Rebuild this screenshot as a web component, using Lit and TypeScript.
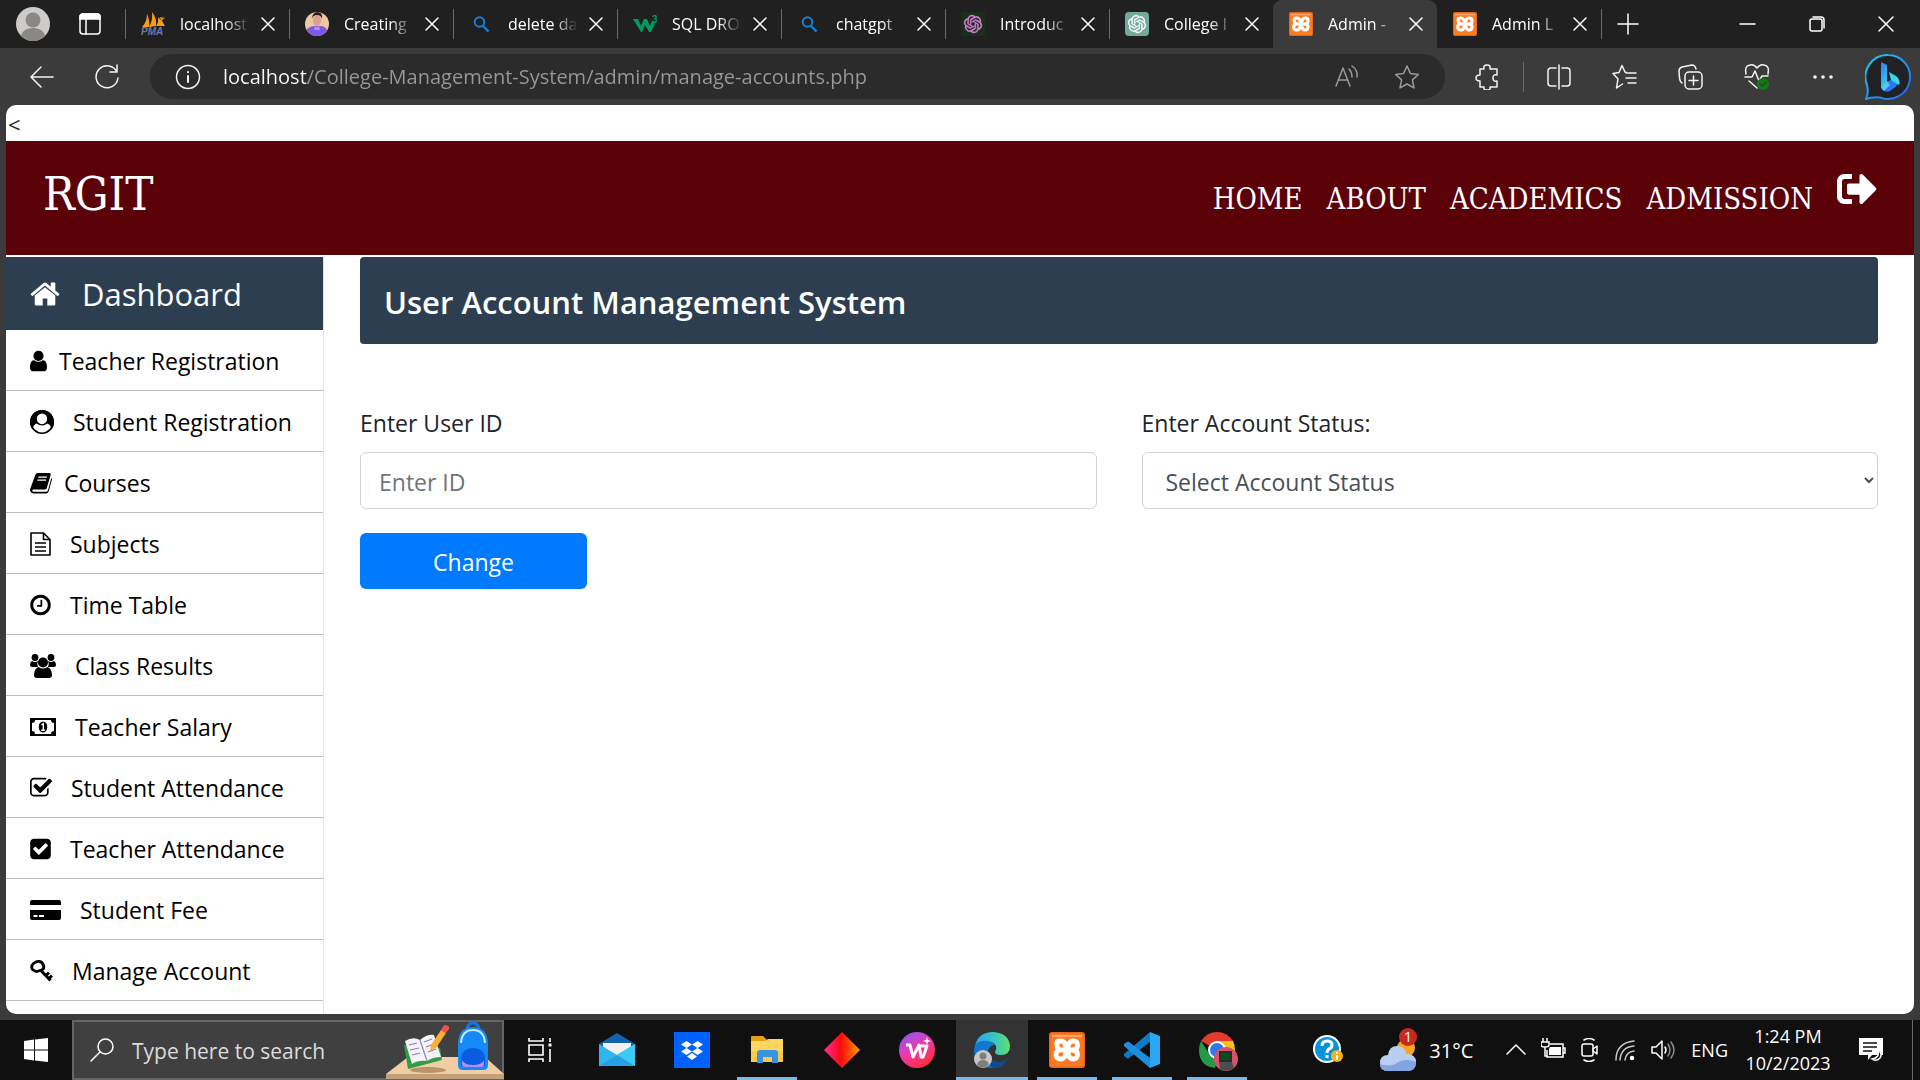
import { LitElement, html, css, TemplateResult } from "lit";
import { customElement } from "lit/decorators.js";
import { classMap } from "lit/directives/class-map.js";

const openAiMark =
  "M22.2819 9.8211a5.9847 5.9847 0 0 0-.5157-4.9108 6.0462 6.0462 0 0 0-6.5098-2.9A6.0651 6.0651 0 0 0 4.9807 4.1818a5.9847 5.9847 0 0 0-3.9977 2.9 6.0462 6.0462 0 0 0 .7427 7.0966 5.98 5.98 0 0 0 .511 4.9107 6.051 6.051 0 0 0 6.5146 2.9001A5.9847 5.9847 0 0 0 13.2599 24a6.0557 6.0557 0 0 0 5.7718-4.2058 5.9894 5.9894 0 0 0 3.9977-2.9001 6.0557 6.0557 0 0 0-.7475-7.0729zm-9.022 12.6081a4.4755 4.4755 0 0 1-2.8764-1.0408l.1419-.0804 4.7783-2.7582a.7948.7948 0 0 0 .3927-.6813v-6.7369l2.02 1.1686a.071.071 0 0 1 .038.052v5.5826a4.504 4.504 0 0 1-4.4945 4.4944zm-9.6607-4.1254a4.4708 4.4708 0 0 1-.5346-3.0137l.142.0852 4.783 2.7582a.7712.7712 0 0 0 .7806 0l5.8428-3.3685v2.3324a.0804.0804 0 0 1-.0332.0615L9.74 19.9502a4.4992 4.4992 0 0 1-6.1408-1.6464zM2.3408 7.8956a4.485 4.485 0 0 1 2.3655-1.9728V11.6a.7664.7664 0 0 0 .3879.6765l5.8144 3.3543-2.0201 1.1685a.0757.0757 0 0 1-.071 0l-4.8303-2.7865A4.504 4.504 0 0 1 2.3408 7.872zm16.5963 3.8558L13.1038 8.364 15.1192 7.2a.0757.0757 0 0 1 .071 0l4.8303 2.7913a4.4944 4.4944 0 0 1-.6765 8.1042v-5.6772a.79.79 0 0 0-.407-.667zm2.0107-3.0231l-.142-.0852-4.7735-2.7818a.7759.7759 0 0 0-.7854 0L9.409 9.2297V6.8974a.0662.0662 0 0 1 .0284-.0615l4.8303-2.7866a4.4992 4.4992 0 0 1 6.6802 4.66zM8.3065 12.863l-2.02-1.1638a.0804.0804 0 0 1-.038-.0567V6.0742a4.4992 4.4992 0 0 1 7.3757-3.4537l-.142.0805L8.704 5.459a.7948.7948 0 0 0-.3927.6813zm1.0976-2.3654l2.602-1.4998 2.6069 1.4998v2.9994l-2.5974 1.4997-2.6067-1.4997Z";

const searchFavicon = html`<svg class="fav" viewBox="0 0 24 24" fill="none" stroke="#1a7fd6" stroke-width="2">
  <circle cx="10.500" cy="10" r="4.800" /><path d="M14 14l5.500 5.500" stroke-width="2.400" />
</svg>`;

const xampp = (cls: string) => html`<svg class=${cls} viewBox="0 0 36 36">
  <rect width="36" height="36" rx="3" fill="#e8661c" />
  <rect x="1.500" y="1.500" width="33" height="33" rx="2" fill="#fb7a24" />
  <path d="M3 4h30" stroke="#fdb98a" stroke-width="2" opacity=".7" />
  <g fill="none" stroke="#fff" stroke-width="4.800" stroke-linejoin="round" stroke-linecap="round">
    <path d="M8 10v3q0 5 5 5h11" />
    <path d="M8 12q0-3 3.500-3t4.500 3l2 6 2 6q1 3 4.500 3t4-4q0-5-4.500-5 4.500 0 4.500-5 0-4-4-4t-5 4l-3 10q-1 4-5 4t-4.500-4q0-4 3.500-5" />
  </g>
</svg>`;

interface Tab { title: string; icon: TemplateResult; active?: boolean; line?: boolean; }

const tabs: Tab[] = [
  {
    title: "localhost", line: true,
    icon: html`<svg class="fav" viewBox="0 0 24 24"><path d="M1 15Q6 10 6 2q3 6 2 13zM8 15Q12 9 11 0q5 6 4 14zM15 14q3-4 2-9 5 4 7 9z" fill="#f89c1c" /><path d="M13 5l4 10M19 5l5 1-4 3z" fill="#e8871a" /><text x="0" y="23" font-size="10" font-weight="700" font-style="italic" font-family="Liberation Sans, sans-serif" fill="#6c78af">PMA</text></svg>`,
  },
  {
    title: "Creating", line: true,
    icon: html`<svg class="fav" viewBox="0 0 24 24"><defs><clipPath id="avatar"><circle cx="12" cy="12" r="12" /></clipPath></defs><g clip-path="url(#avatar)"><rect width="24" height="24" fill="#edc8a1" /><path d="M2 24V17q3-3 7-3h6q5 0 7 4v6z" fill="#7d59e6" /><ellipse cx="12" cy="8.500" rx="4" ry="5.500" fill="#dba18c" /><path d="M7 7Q7 1 12 0q6 0 5 7-1-4-5-4T7 7z" fill="#2b1a1c" /><path d="M10 14q2 2 4 0l1 4h-6z" fill="#b98cf0" /></g></svg>`,
  },
  { title: "delete da", line: true, icon: searchFavicon },
  {
    title: "SQL DRO", line: true,
    icon: html`<svg class="fav" viewBox="0 0 24 24" fill="#059862"><path d="M0 7h5l3 7 3-7h3l3 7 2-5 3 3-4 8h-2l-4-7-3 7H8z" /><text x="19" y="11" font-size="10" font-weight="700" font-family="Liberation Sans, sans-serif">3</text></svg>`,
  },
  { title: "chatgpt", line: true, icon: searchFavicon },
  {
    title: "Introduc", line: true,
    icon: html`<svg class="fav" viewBox="0 0 24 24"><rect width="24" height="24" fill="#18301a" /><path transform="translate(3 3) scale(.75)" d=${openAiMark} fill="#df7fdc" stroke="#df7fdc" stroke-width=".5" /></svg>`,
  },
  {
    title: "College I", line: true,
    icon: html`<svg class="fav" viewBox="0 0 24 24"><rect width="24" height="24" rx="4" fill="#74aa9c" /><path transform="translate(3 3) scale(.75)" d=${openAiMark} fill="#fff" stroke="#fff" stroke-width=".3" /></svg>`,
  },
  { title: "Admin -", active: true, icon: xampp("fav") },
  { title: "Admin L", icon: xampp("fav") },
];

interface MenuItem { label: string; icon: TemplateResult; near?: boolean; }

const menu: MenuItem[] = [
  {
    label: "Teacher Registration", near: true,
    icon: html`<svg width="17" height="24" viewBox="256 0 1280 1792"><path d="M1536 1399q0 109-62.5 187t-150.5 78h-854q-88 0-150.5-78t-62.5-187q0-85 8.500-160.500t31.500-152 58.500-131 94-89 134.500-34.500q131 128 313 128t313-128q76 0 134.500 34.500t94 89 58.500 131 31.500 152 8.500 160.500zm-256-887q0 159-112.500 271.500t-271.500 112.500-271.500-112.500-112.500-271.500 112.500-271.500 271.500-112.500 271.500 112.500 112.500 271.500z" /></svg>`,
  },
  {
    label: "Student Registration",
    icon: html`<svg width="24" height="24" viewBox="0 0 24 24"><circle cx="12" cy="12" r="11.200" fill="none" stroke="#000" stroke-width="1.600" /><path fill-rule="evenodd" d="M12 0a12 12 0 0 1 9.500 19.300C21 16 19.500 14 17.200 13.400 15.700 14.700 14 15.400 12 15.400s-3.700-.7-5.200-2C4.500 14 3 16 2.500 19.300A12 12 0 0 1 12 0zm0 3.400a5.200 5.400 0 1 0 0 10.800 5.200 5.400 0 1 0 0-10.800z" /></svg>`,
  },
  {
    label: "Courses", near: true,
    icon: html`<svg width="22" height="24" viewBox="0 0 22 24"><path fill-rule="evenodd" d="M8 2h11.500q1.600.3 1.100 2l-3.800 13q-.5 1.500-2 1.500H3.500q-1.300 0-1.300 1t1.300 1.200h13q1 0 1.400-1.100L21.300 7q1 .6.600 1.800l-3.200 11.500Q18 22.500 16 22.500H3.500Q0 22 0 18.500L5.300 4Q6 2 8 2zM8.500 5.500l-.4 1.200h8.600l.4-1.200zM7.700 8.500l-.4 1.200h8.600l.4-1.200z" /></svg>`,
  },
  {
    label: "Subjects",
    icon: html`<svg width="21" height="24" viewBox="0 0 21 24" fill="none" stroke="#000" stroke-width="1.600"><path d="M1 1h12.500L20 7.500V23H1zM13.500 1v6.500H20M5 11h11M5 15h11M5 19h11" stroke-linejoin="round" /></svg>`,
  },
  {
    label: "Time Table",
    icon: html`<svg width="21" height="24" viewBox="128 0 1536 1792"><path d="M1024 544v448q0 14-9 23t-23 9h-320q-14 0-23-9t-9-23v-64q0-14 9-23t23-9h224v-352q0-14 9-23t23-9h64q14 0 23 9t9 23zm416 352q0-148-73-273t-198-198-273-73-273 73-198 198-73 273 73 273 198 198 273 73 273-73 198-198 73-273zm224 0q0 209-103 385.500t-279.500 279.500-385.500 103-385.500-103-279.500-279.500-103-385.500 103-385.500 279.500-279.500 385.500-103 385.500 103 279.500 279.500 103 385.500z" /></svg>`,
  },
  {
    label: "Class Results",
    icon: html`<svg width="26" height="24" viewBox="0 0 26 24"><circle cx="5" cy="3.500" r="3.400" /><circle cx="21" cy="3.500" r="3.400" /><circle cx="13" cy="8.500" r="5" /><path d="M2 7q3 2 6 0-1.500 3 0 6H2q-2 0-2-2 0-3 2-4zM24 7q-3 2-6 0 1.500 3 0 6h6q2 0 2-2 0-3-2-4zM8.500 13q4.500 3 9 0 4 1 4.500 8 0 3-3 3H7q-3 0-3-3 .5-7 4.500-8z" /></svg>`,
  },
  {
    label: "Teacher Salary",
    icon: html`<svg width="26" height="24" viewBox="0 0 26 24"><path fill-rule="evenodd" d="M0 3h26v18H0zM5 5Q5 8 2 8v8q3 0 3 3h16q0-3 3-3V8q-3 0-3-3z" /><ellipse cx="13" cy="12" rx="4.300" ry="5.500" /><path d="M11.500 10l1.800-1.400V15M11.300 15.200h3.600" stroke="#fff" stroke-width="1.400" fill="none" /></svg>`,
  },
  {
    label: "Student Attendance",
    icon: html`<svg width="22" height="24" viewBox="64 0 1664 1792"><path d="M1472 930v318q0 119-84.500 203.500t-203.500 84.500h-832q-119 0-203.500-84.500t-84.500-203.500v-832q0-119 84.500-203.500t203.500-84.500h832q63 0 117 25 15 7 18 23 3 17-9 29l-49 49q-10 10-23 10-3 0-9-2-23-6-45-6h-832q-66 0-113 47t-47 113v832q0 66 47 113t113 47h832q66 0 113-47t47-113v-254q0-13 9-22l64-64q10-10 23-10 6 0 12 3 20 8 20 29zm231-489l-814 814q-24 24-57 24t-57-24l-430-430q-24-24-24-57t24-57l110-110q24-24 57-24t57 24l263 263 647-647q24-24 57-24t57 24l110 110q24 24 24 57t-24 57z" /></svg>`,
  },
  {
    label: "Teacher Attendance",
    icon: html`<svg width="21" height="24" viewBox="128 0 1536 1792"><path d="M813 1299l614-614q19-19 19-45t-19-45l-102-102q-19-19-45-19t-45 19l-467 467-211-211q-19-19-45-19t-45 19l-102 102q-19 19-19 45t19 45l358 358q19 19 45 19t45-19zm851-883v960q0 119-84.500 203.500t-203.500 84.500h-960q-119 0-203.500-84.500t-84.500-203.500v-960q0-119 84.500-203.500t203.500-84.500h960q119 0 203.500 84.500t84.500 203.500z" /></svg>`,
  },
  {
    label: "Student Fee",
    icon: html`<svg width="31" height="24" viewBox="0 0 31 24"><path fill-rule="evenodd" d="M2 2h27q2 0 2 2v3H0V4q0-2 2-2zM0 12h31v8q0 2-2 2H2q-2 0-2-2zM3.500 17v2h4v-2zM9 17v2h5v-2z" /></svg>`,
  },
  {
    label: "Manage Account",
    icon: html`<svg width="23" height="24" viewBox="0 0 23 24" fill="none" stroke="#000"><path d="M2.500 10.500Q.5 7 3.500 4.500t6-2 4 4-2 4.500-4.500 1.500-4.500-2z" stroke-width="2.800" /><path d="M10.500 11l10 10.500M16 16.500l3-3M19 19.500l3-3" stroke-width="3" /></svg>`,
  },
];

interface TaskApp { name: string; icon: TemplateResult; open?: boolean; active?: boolean; }

const taskApps: TaskApp[] = [
  {
    name: "Mail",
    icon: html`<svg viewBox="0 0 36 36"><path d="M0 12L18 1l18 11v22H0z" fill="#1463ad" /><path d="M4 11h28v14H4z" fill="#f1f1f3" /><path d="M0 12l18 11L36 12v22H0z" fill="#32b5ee" /><path d="M36 12L0 34h34q2 0 2-2z" fill="#3ccbf4" /><path d="M0 34l18-11 18 11z" fill="#1a90da" opacity=".7" /></svg>`,
  },
  {
    name: "Dropbox",
    icon: html`<svg viewBox="0 0 36 36"><rect width="36" height="36" fill="#0061fe" /><path d="M12.500 9l5.500 3.500-5.500 3.500L7 12.500zM23.500 9l5.500 3.500-5.500 3.500-5.500-3.500zM12.500 16l5.500 3.500-5.500 3.500L7 19.500zM23.500 16l5.500 3.500-5.500 3.500-5.500-3.500zM18 21l5 3.500-5 3.500-5-3.500z" fill="#fff" /></svg>`,
  },
  {
    name: "File Explorer", open: true,
    icon: html`<svg viewBox="0 0 36 36"><path d="M2 5q0-1 1-1h11l4 4h15q1 0 1 1v5H2z" fill="#e0a011" /><path d="M2 9h14l3-2h15v22q0 1-1 1H2z" fill="#ffd560" /><path d="M2 19h32v10q0 1-1 1H3q-1 0-1-1z" fill="#fac94c" /><path d="M8 31V21q0-3 3-3h15q3 0 3 3v10h-6v-6h-9v6z" fill="#3a93dd" /></svg>`,
  },
  {
    name: "Diamond",
    icon: html`<svg viewBox="0 0 36 36"><defs><linearGradient id="diamond"><stop offset="0" stop-color="#ff2d9c" /><stop offset=".45" stop-color="#fb0a10" /><stop offset=".6" stop-color="#ff2a00" /><stop offset="1" stop-color="#ffa000" /></linearGradient></defs><path d="M18 0l18 18-18 18L0 18z" fill="url(#diamond)" /></svg>`,
  },
  {
    name: "WPS Office",
    icon: html`<svg viewBox="0 0 36 36"><defs><linearGradient id="wps" x1="0" y1="0" x2=".6" y2="1"><stop offset="0" stop-color="#7a5cff" /><stop offset=".5" stop-color="#e63bb4" /><stop offset="1" stop-color="#ff2d3f" /></linearGradient></defs><circle cx="18" cy="18" r="18" fill="url(#wps)" /><path d="M7 13h4l3 12 6-12 2 12h2l4-11h-9" fill="none" stroke="#fff" stroke-width="3" stroke-linejoin="round" /><path d="M28 5l1 3 3 1-3 1-1 3-1-3-3-1 3-1z" fill="#fff" /></svg>`,
  },
  {
    name: "Microsoft Edge", active: true,
    icon: html`<svg viewBox="0 0 36 36"><defs><linearGradient id="edgeTop"><stop offset="0" stop-color="#2aa5e6" /><stop offset=".5" stop-color="#35c1c9" /><stop offset="1" stop-color="#62e06c" /></linearGradient></defs><path d="M1 14Q4 0 19 0q16 1 17 14 0 9-9 9-6 0-6-3 2-3 1-6-3-5-10-4-7 0-11 4z" fill="url(#edgeTop)" /><path d="M0 18q0-8 8-9 9-1 13 4-6 0-7 7 0 8 9 11 4 1 9-2-5 7-14 7Q1 35 0 18z" fill="#1277cf" /><path d="M14 19q0 9 9 11 5 1 11-4-5 11-15 10-9-5-5-17z" fill="#0d4a94" /><circle cx="9" cy="27" r="9" fill="#c8c8c6" /><circle cx="9" cy="24" r="3.500" fill="#807d7a" /><path d="M3 33q1-5 6-5t6 5q-6 5-12 0z" fill="#807d7a" /></svg>`,
  },
  { name: "XAMPP", open: true, icon: xampp("") },
  {
    name: "Visual Studio Code", open: true,
    icon: html`<svg viewBox="0 0 36 36"><path d="M26 0l10 4v28l-10 4z" fill="#2aa6f2" /><path d="M26 0v10L5 26q-1 1-2 0l-3-2q-1-1 0-2z" fill="#0f79c4" /><path d="M26 36V26L5 10q-1-1-2 0l-3 2q-1 1 0 2z" fill="#1f8fdc" /></svg>`,
  },
  {
    name: "Google Chrome", open: true,
    icon: html`<svg viewBox="0 0 36 36" overflow="visible"><path d="M18 18L2 9Q8 0 18 0t16 9z" fill="#e33b2e" /><path d="M18 9h16q2 4 2 9 0 12-10 16z" fill="#fbc116" /><path d="M2 9l9 14 8 3-3 10Q0 34 0 18q0-5 2-9z" fill="#249a48" /><circle cx="18" cy="18" r="9" fill="#fff" /><circle cx="18" cy="18" r="7" fill="#2f78e8" /><circle cx="27" cy="27" r="12" fill="#d5536b" /><path d="M20 30h13l2 6q-7 5-14 1z" fill="#4a4f4c" /><path d="M20 19h13v11H20z" fill="#23302a" /><path d="M22 21h9v7h-9z" fill="#0b4d1c" /></svg>`,
  },
];

@customElement("app-root")
export class AppRoot extends LitElement {
  static styles = css`
    :host {
      display: flex;
      flex-direction: column;
      height: 100vh;
      overflow: hidden;
      background: #3b3b3b;
      color: #212529;
      font-family: "Open Sans", "Noto Sans", sans-serif;
    }
    * { box-sizing: border-box; }
    svg { display: block; flex: none; }
    button, input, select { font-family: inherit; margin: 0; }
    button { background: none; border: 0; padding: 0; color: inherit; }
    a { color: inherit; text-decoration: none; }
    .line { fill: none; stroke: currentColor; stroke-width: 1.5; stroke-linecap: round; stroke-linejoin: round; }

    .tabs { display: flex; align-items: center; height: 48px; background: #202020; color: #fff; flex: none; }
    .profile { margin: 0 29px 0 16px; }
    .workspaces { margin-right: 24px; }
    .divider { width: 1px; height: 30px; background: #6a6a6a; flex: none; }
    .tab { display: flex; align-items: center; width: 164px; height: 48px; padding: 0 13px 0 16px; }
    .tab.ruled { background: linear-gradient(#6a6a6a, #6a6a6a) left center / 1px 30px no-repeat; }
    .tab.active { background: #3b3b3b; border-radius: 9px 9px 0 0; }
    .tab-main { display: flex; align-items: center; gap: 15px; flex: 1; min-width: 0; height: 48px; }
    .fav { width: 24px; height: 24px; }
    .tab-title { width: 76px; margin-right: -8px; flex: none; overflow: hidden; white-space: nowrap; text-align: left; font-size: 16px; line-height: 24px; -webkit-mask-image: linear-gradient(90deg, #000 60%, transparent 92%); mask-image: linear-gradient(90deg, #000 60%, transparent 92%); }
    .new-tab { margin-left: 15px; }
    .window-controls { display: flex; gap: 45px; margin-left: auto; padding-right: 22px; }

    .toolbar { display: flex; align-items: center; height: 57px; flex: none; color: #f4f4f4; padding: 0 9px 0 29px; }
    .reload { margin: 0 30px 0 40px; }
    .address { flex: 1; display: flex; align-items: center; height: 45px; border-radius: 22px; background: #2b2b2b; padding: 0 25px; }
    .url { flex: 1; min-width: 0; margin-left: 22px; padding: 0; border: 0; outline: 0; font-size: 20px; line-height: 30px; color: #989898; background: linear-gradient(90deg, #fff 84px, #989898 84px); -webkit-background-clip: text; background-clip: text; -webkit-text-fill-color: transparent; }
    .muted { color: #9a9a9a; display: flex; gap: 34px; }
    .tools { display: flex; align-items: center; gap: 41px; margin-left: 30px; }
    .tools .divider { margin: 0 -18px; }
    .bing { margin-left: 30px; }

    .page { flex: 1; min-height: 0; display: flex; flex-direction: column; overflow: hidden; margin: 0 6px 6px; border-radius: 10px; background: #fff; }
    .stray { margin: 0; padding: 3px 0 0 2px; font-size: 22px; line-height: 33px; height: 36px; flex: none; }
    .site-header { display: flex; justify-content: space-between; align-items: center; height: 114px; flex: none; padding: 0 37px; background: #5b0209; color: #fff; font-family: "DejaVu Serif Condensed", "DejaVu Serif", serif; }
    .brand { font-size: 47px; line-height: 56px; padding-bottom: 8px; }
    .site-nav { display: flex; align-items: center; gap: 24px; padding-top: 2px; font-size: 29px; line-height: 36px; }
    .logout { padding-bottom: 20px; }
    .body { flex: 1; min-height: 0; display: flex; margin-top: 2px; }
    .sidebar { width: 318px; flex: none; border-right: 1px solid #dee2e6; overflow: hidden; color: #000; }
    .dash { display: flex; align-items: center; gap: 22px; height: 73px; padding-left: 24px; background: #2c3e50; color: #fff; fill: #fff; font-size: 31px; line-height: 48px; }
    .menu { list-style: none; margin: 0; padding: 0; }
    .item { display: flex; align-items: center; gap: 19px; height: 61px; padding: 2px 0 0 24px; border-bottom: 1px solid #bfbfbf; font-size: 23px; line-height: 36px; white-space: nowrap; }
    .item.near { gap: 12px; }
    .main { flex: 1; min-width: 0; padding: 0 36px; }
    .banner { height: 87px; padding: 20px 24px; margin: 0; border-radius: 4px; background: #2c3e50; color: #fff; font-size: 31px; line-height: 50px; font-weight: 600; }
    .fields { display: grid; grid-template-columns: 1fr 1fr; gap: 24px 45px; margin-top: 61px; }
    .field { display: flex; flex-direction: column; gap: 11px; font-size: 23px; line-height: 36px; }
    .control { width: 100%; height: 57px; border: 1px solid #ced4da; border-radius: 6px; background: #fff; color: #495057; font-size: 23px; line-height: 36px; padding: 2px 18px 0; outline: 0; }
    .control::placeholder { color: #6c757d; opacity: 1; }
    .select { padding: 2px 0 0 19px; }
    .submit { width: 227px; height: 56px; border-radius: 6px; background: #007bff; color: #fff; font-size: 23px; line-height: 36px; padding-top: 2px; }

    .taskbar { display: flex; align-items: stretch; height: 60px; flex: none; background: #101010; color: #fff; }
    .start { display: flex; align-items: center; justify-content: center; width: 72px; }
    .search { display: flex; align-items: center; width: 432px; border: 2px solid #666; background: #404040; padding-left: 15px; }
    .search-input { flex: 1; min-width: 0; margin-left: 17px; padding: 2px 0 0; border: 0; outline: 0; background: none; color: #fff; font-size: 21px; line-height: 30px; }
    .search-input::placeholder { color: #dcdcdc; opacity: 1; }
    .scene { margin-right: -2px; }
    .task-view { width: 72px; display: flex; align-items: center; justify-content: center; }
    .apps { display: flex; gap: 3px; margin-left: 5px; }
    .app { display: flex; align-items: center; justify-content: center; width: 72px; }
    .app svg { width: 36px; height: 36px; }
    .app.open { background: linear-gradient(#76b9ed, #76b9ed) center bottom / 60px 3px no-repeat; }
    .app.active { background: linear-gradient(#76b9ed, #76b9ed) center bottom / 100% 3px no-repeat #333; }
    .tray { display: flex; align-items: center; margin-left: auto; gap: 15px; font-size: 18px; line-height: 27px; }
    .weather { display: flex; align-items: center; gap: 11px; margin: 0 18px 0 22px; font-size: 20px; }
    .clock { text-align: center; width: 90px; }
    .notice { margin-left: 10px; }
    .show-desktop { width: 8px; height: 60px; margin-left: 13px; border-left: 1px solid #6a6a6a; }
  `;

  private renderTab(tab: Tab) {
    return html`<div class=${classMap({ tab: true, active: !!tab.active, ruled: !!tab.line })}>
      <button class="tab-main">${tab.icon}<span class="tab-title">${tab.title}</span></button>
      <button aria-label="Close tab"><svg class="line" width="16" height="16" viewBox="0 0 16 16"><path d="M2 2l12 12M14 2L2 14" /></svg></button>
    </div>`;
  }

  private renderTabStrip() {
    return html`<div class="tabs">
      <button class="profile" aria-label="Profile"><svg width="34" height="34" viewBox="0 0 34 34"><circle cx="17" cy="17" r="17" fill="#cdcbc9" /><circle cx="17" cy="13" r="7.500" fill="#8a8784" /><path d="M5 29q2-8 12-8t12 8q-5 5-12 5T5 29z" fill="#8a8784" /></svg></button>
      <button class="workspaces" aria-label="Tab actions"><svg class="line" width="22" height="22" viewBox="0 0 22 22"><rect x="1" y="1" width="20" height="20" rx="3" /><path d="M1 6V4q0-3 3-3h14q3 0 3 3v2z" fill="currentColor" /><path d="M7 6v15" /></svg></button>
      ${tabs.map((t) => this.renderTab(t))}
      <span class="divider"></span>
      <button class="new-tab" aria-label="New tab"><svg class="line" width="22" height="22" viewBox="0 0 22 22"><path d="M11 1v20M1 11h20" /></svg></button>
      <div class="window-controls">
        <button aria-label="Minimize"><svg class="line" width="24" height="24" viewBox="0 0 24 24"><path d="M4 12h15" /></svg></button>
        <button aria-label="Restore"><svg class="line" width="24" height="24" viewBox="0 0 24 24"><rect x="5" y="7" width="12" height="12" rx="2" /><path d="M8 5h8q3 0 3 3v8" /></svg></button>
        <button aria-label="Close"><svg class="line" width="24" height="24" viewBox="0 0 24 24"><path d="M5 5l14 14M19 5L5 19" /></svg></button>
      </div>
    </div>`;
  }

  private renderToolbar() {
    return html`<div class="toolbar">
      <button aria-label="Back"><svg class="line" width="26" height="26" viewBox="0 0 26 26"><path d="M12 3L2 13l10 10M2 13h22" /></svg></button>
      <button class="reload" aria-label="Refresh"><svg class="line" width="25" height="26" viewBox="0 0 25 26"><path d="M22 8A11 11 0 1 0 23 14M22 1v7h-7" /></svg></button>
      <div class="address">
        <svg class="line" width="26" height="26" viewBox="0 0 26 26"><circle cx="13" cy="13" r="11.500" /><path d="M13 12v6M13 8v.2" stroke-width="2" /></svg>
        <input class="url" aria-label="Address" .value=${"localhost/College-Management-System/admin/manage-accounts.php"} />
        <div class="muted">
          <button aria-label="Read aloud"><svg class="line" width="26" height="26" viewBox="0 0 26 26"><path d="M2 22L9 4l7 18M5 16h8M15 5q3 3 3 8M18 2q6 4 5 11" /></svg></button>
          <button aria-label="Favorite"><svg class="line" width="26" height="26" viewBox="0 0 26 26"><path d="M13 2l3.400 7.400 8 1-6 5.500 1.600 8L13 20l-7 3.900 1.600-8-6-5.500 8-1z" /></svg></button>
        </div>
      </div>
      <div class="tools">
        <button aria-label="Extensions"><svg class="line" width="25" height="26" viewBox="0 0 25 26"><path d="M5 5h4q-1-4 3-4t3 4h7v6q-4-1-4 3t4 3v6h-7q1 3-3 3t-3-3H5v-6q-4 0-4-3t4-3z" /></svg></button>
        <span class="divider"></span>
        <button aria-label="Split screen"><svg class="line" width="24" height="26" viewBox="0 0 24 26"><path d="M9 4H4Q1 4 1 7v12q0 3 3 3h5M15 4h5q3 0 3 3v12q0 3-3 3h-5M12 1v24" /></svg></button>
        <button aria-label="Favorites"><svg class="line" width="25" height="26" viewBox="0 0 25 26"><path d="M15 9l-2-1-3-6.500L7 8.500l-6 1 5 5.500-1.500 9 6-4M16 9h8M14 14h10M16 19h8" /></svg></button>
        <button aria-label="Collections"><svg class="line" width="25" height="26" viewBox="0 0 25 26"><rect x="7" y="8" width="17" height="17" rx="4" /><path d="M15.500 12v9M11 16.500h9M4 19Q2 18 1.500 14L1 7q0-3 3-4l10-2q3 0 4 4" /></svg></button>
        <button aria-label="Browser essentials"><svg class="line" width="26" height="28" viewBox="0 0 26 28"><path d="M2 11Q0 3 6 2q4-1 7 3 3-4 7-3 6 1 4 9M1 14h7l3-6 4 10 3-5h6M5 18l8 7" /><circle cx="19" cy="21" r="6" fill="#107c10" stroke="none" /><path d="M16 21l2 2 4-4" stroke="#3b3b3b" /></svg></button>
        <button aria-label="More"><svg width="24" height="24" viewBox="0 0 24 24" fill="#f4f4f4"><circle cx="4" cy="12" r="1.800" /><circle cx="12" cy="12" r="1.800" /><circle cx="20" cy="12" r="1.800" /></svg></button>
      </div>
      <button class="bing" aria-label="Bing chat"><svg width="46" height="46" viewBox="0 0 46 46"><defs><linearGradient id="ring" x2="1" y2="1"><stop offset="0" stop-color="#20d0e8" /><stop offset="1" stop-color="#2460ee" /></linearGradient><linearGradient id="bee" x2=".3" y2="1"><stop offset="0" stop-color="#2c83ee" /><stop offset="1" stop-color="#36c5f2" /></linearGradient></defs><path d="M23 1a22 22 0 1 1-8 42.500q-7-1-14 1.500 3-6 1-14A22 22 0 0 1 23 1z" fill="#202124" stroke="url(#ring)" stroke-width="2" /><path d="M16 8l6 3v18l-6 5z" fill="url(#bee)" /><path d="M16 32l6-4 7-4 5 2q-1 5-5 8l-4 3q-4 2-7-1-2-2-2-4z" fill="#2a76f0" /><path d="M16 32l6-5 3 4-6 6q-3-2-3-5z" fill="#5cc3f5" /><path d="M24 18l7 4q5 4 3 9l-8-5z" fill="#37d6e8" /></svg></button>
    </div>`;
  }

  private renderPage() {
    return html`<div class="page">
      <p class="stray">&lt;</p>
      <header class="site-header">
        <a class="brand" href="#">RGIT</a>
        <nav class="site-nav">
          <a href="#">HOME</a><a href="#">ABOUT</a><a href="#">ACADEMICS</a><a href="#">ADMISSION</a>
          <a class="logout" href="#" aria-label="Log out"><svg width="40" height="40" viewBox="0 0 512 512" fill="#fff"><path d="M497 273L329 441c-15 15-41 4.500-41-17v-96H152c-13.300 0-24-10.700-24-24v-96c0-13.300 10.700-24 24-24h136V88c0-21.400 25.900-32 41-17l168 168c9.300 9.400 9.300 24.600 0 34zM192 436v-40c0-6.600-5.400-12-12-12H96c-17.700 0-32-14.300-32-32V160c0-17.700 14.300-32 32-32h84c6.600 0 12-5.400 12-12V76c0-6.600-5.400-12-12-12H96c-53 0-96 43-96 96v192c0 53 43 96 96 96h84c6.600 0 12-5.400 12-12z" /></svg></a>
        </nav>
      </header>
      <div class="body">
        <aside class="sidebar">
          <a class="dash" href="#"><svg width="30" height="32" viewBox="64 0 1664 1792"><path d="M1472 992v480q0 26-19 45t-45 19h-384v-384h-256v384h-384q-26 0-45-19t-19-45v-480q0-1 .5-3t.5-3l575-474 575 474q1 2 1 6zm223-69l-62 74q-8 9-21 11h-3q-13 0-21-7l-692-577-692 577q-12 8-24 7-13-2-21-11l-62-74q-8-10-7-23.500t11-21.500l719-599q32-26 76-26t76 26l244 204v-195q0-14 9-23t23-9h192q14 0 23 9t9 23v408l219 182q10 8 11 21.500t-7 23.500z" /></svg>Dashboard</a>
          <ul class="menu">
            ${menu.map((m) => html`<li><a href="#" class=${classMap({ item: true, near: !!m.near })}>${m.icon}${m.label}</a></li>`)}
          </ul>
        </aside>
        <main class="main">
          <h1 class="banner">User Account Management System</h1>
          <form class="fields" @submit=${(e: Event) => e.preventDefault()}>
            <div class="field">
              <label for="user-id">Enter User ID</label>
              <input class="control" id="user-id" type="text" placeholder="Enter ID" />
            </div>
            <div class="field">
              <label for="status">Enter Account Status:</label>
              <select class="control select" id="status"><option>Select Account Status</option></select>
            </div>
            <button class="submit" type="submit">Change</button>
          </form>
        </main>
      </div>
    </div>`;
  }

  private renderTaskbar() {
    return html`<div class="taskbar">
      <button class="start" aria-label="Start"><svg width="24" height="24" viewBox="0 0 24 24" fill="#fff"><path d="M0 3l10-1.500V11.500H0zM11 1.400L24 0v11.500H11zM0 12.500h10v10L0 21zM11 12.500h13V24l-13-1.500z" /></svg></button>
      <div class="search">
        <svg class="line" width="26" height="26" viewBox="0 0 26 26"><circle cx="16.500" cy="9.500" r="7.500" /><path d="M11 15L2 24" /></svg>
        <input class="search-input" type="text" aria-label="Type here to search" placeholder="Type here to search" />
        <svg class="scene" width="118" height="58" viewBox="0 0 118 58"><path d="M0 53l22-17h77l19 17z" fill="#f0cda4" /><path d="M0 53h118v5H0z" fill="#c4a078" /><ellipse cx="42" cy="49" rx="18" ry="3" fill="#b9946b" /><path d="M18 24l4 24 34-9-2-12z" fill="#2f9e44" /><path d="M19 20q8-5 15-1 7-6 14-5l7 22q-8 0-14 4-9-1-15 3z" fill="#f5f2fb" /><path d="M34 19l7 21M23 24l8-2M24 29l9-2M26 34l8-2M38 21l8-3M40 26l8-3M42 31l8-3" stroke="#8c86a8" stroke-width="1.200" fill="none" /><path d="M45 24L55 9l5 3-10 15-6 3z" fill="#f8b133" /><path d="M55 9l3-5q6 0 5 4l-3 4z" fill="#f0524b" /><path d="M81 10q0-8 6-8t6 8" fill="none" stroke="#1277e0" stroke-width="3" /><path d="M72 24Q72 6 87 6t15 18v20q0 5-5 5H77q-5 0-5-5z" fill="#1489fa" /><path d="M75 22Q76 9 87 9t12 13" stroke="#cbe8ff" stroke-width="2" fill="none" /><path d="M75 45v-8q1-10 12-10t12 10v8z" fill="#0a5be0" /><path d="M76 39q2 5 11 5t11-5v4q0 3-3 3H79q-3 0-3-3z" fill="#b98cf6" /></svg>
      </div>
      <button class="task-view" aria-label="Task view"><svg width="24" height="26" viewBox="0 0 24 26" fill="none" stroke="#fff" stroke-width="1.600"><path d="M1 1v3h14V1M1 25v-3h14v3M1 8h14v10H1zM22 1v4M22 12v13" /><path d="M20.500 8h3" stroke-width="3" /></svg></button>
      <div class="apps">
        ${taskApps.map((a) => html`<button class=${classMap({ app: true, open: !!a.open, active: !!a.active })} aria-label=${a.name}>${a.icon}</button>`)}
      </div>
      <div class="tray">
        <button aria-label="Help"><svg width="30" height="30" viewBox="0 0 30 30"><circle cx="14" cy="14" r="14" fill="#fff" /><circle cx="14" cy="14" r="12" fill="#0a93d8" /><path d="M9 11q0-5 5-5t5 4q0 3-3 4-2 1-2 4M14 20v3" fill="none" stroke="#fff" stroke-width="3" /><circle cx="24" cy="21" r="6" fill="#f5b11e" /><path d="M24 20v5M24 17v1.500" stroke="#fff" stroke-width="2" /></svg></button>
        <button class="weather"><svg width="38" height="44" viewBox="0 -3 38 44"><circle cx="26" cy="17" r="9" fill="#f7a724" /><path d="M8 40q-8 0-8-8t8-8q1-9 9-9 8 0 9 8 10 0 10 8t-8 9z" fill="#b9cdf2" /><path d="M8 40q-8 0-8-7 12 4 18-2 9-4 18 0 0 9-8 9z" fill="#83a5e2" /><circle cx="28" cy="6" r="9" fill="#c62a1c" /><text x="24" y="11" font-size="14" fill="#fff">1</text></svg>31°C</button>
        <button aria-label="Hidden icons"><svg class="line" width="20" height="20" viewBox="0 0 20 20"><path d="M1 14l9-9 9 9" /></svg></button>
        <svg width="25" height="24" viewBox="0 0 25 24" fill="none" stroke="#fff" stroke-width="1.500"><path d="M2 4V0M6 4V0M0 4h8v3q0 2-4 2T0 7zM4 9v9h2M9 6h13v13H6v-7M22 10h2v5h-2" /><path d="M9 9h11v8H8v-6z" fill="#fff" stroke="none" /></svg>
        <svg class="line" width="18" height="24" viewBox="0 0 18 24"><rect x="1" y="6" width="11" height="12" rx="2" /><path d="M12 11l4-3v8l-4-3M3 2q5-3 10 0M3 22q5 3 10 0" /></svg>
        <svg class="line" width="22" height="24" viewBox="0 0 22 24"><path d="M2 22Q2 5 20 3M6 22Q7 9 20 8M11 22q1-8 9-9" stroke="#c8c8c8" /><circle cx="18" cy="20" r="1.500" fill="#fff" /></svg>
        <svg class="line" width="25" height="24" viewBox="0 0 25 24"><path d="M1 9h4l6-6v18l-6-6H1zM14 9q2 3 0 6" /><path d="M17 6q4 6 0 12M20 4q6 8 0 16" stroke="#8c8c8c" /></svg>
        <span>ENG</span>
        <time class="clock">1:24 PM<br />10/2/2023</time>
        <button class="notice" aria-label="Notifications"><svg width="26" height="26" viewBox="0 0 26 26"><path d="M1 1h24v17H14l-4 5v-5H1z" fill="#fff" /><path d="M5 6h14M5 10h14M5 14h9" stroke="#101010" stroke-width="1.500" /><path d="M20 13q5 3 2 8-4 4-8 1 8-1 6-9z" fill="#101010" stroke="#fff" stroke-width="1.500" /></svg></button>
        <span class="show-desktop"></span>
      </div>
    </div>`;
  }

  render() {
    return html`${this.renderTabStrip()}${this.renderToolbar()}${this.renderPage()}${this.renderTaskbar()}`;
  }
}
